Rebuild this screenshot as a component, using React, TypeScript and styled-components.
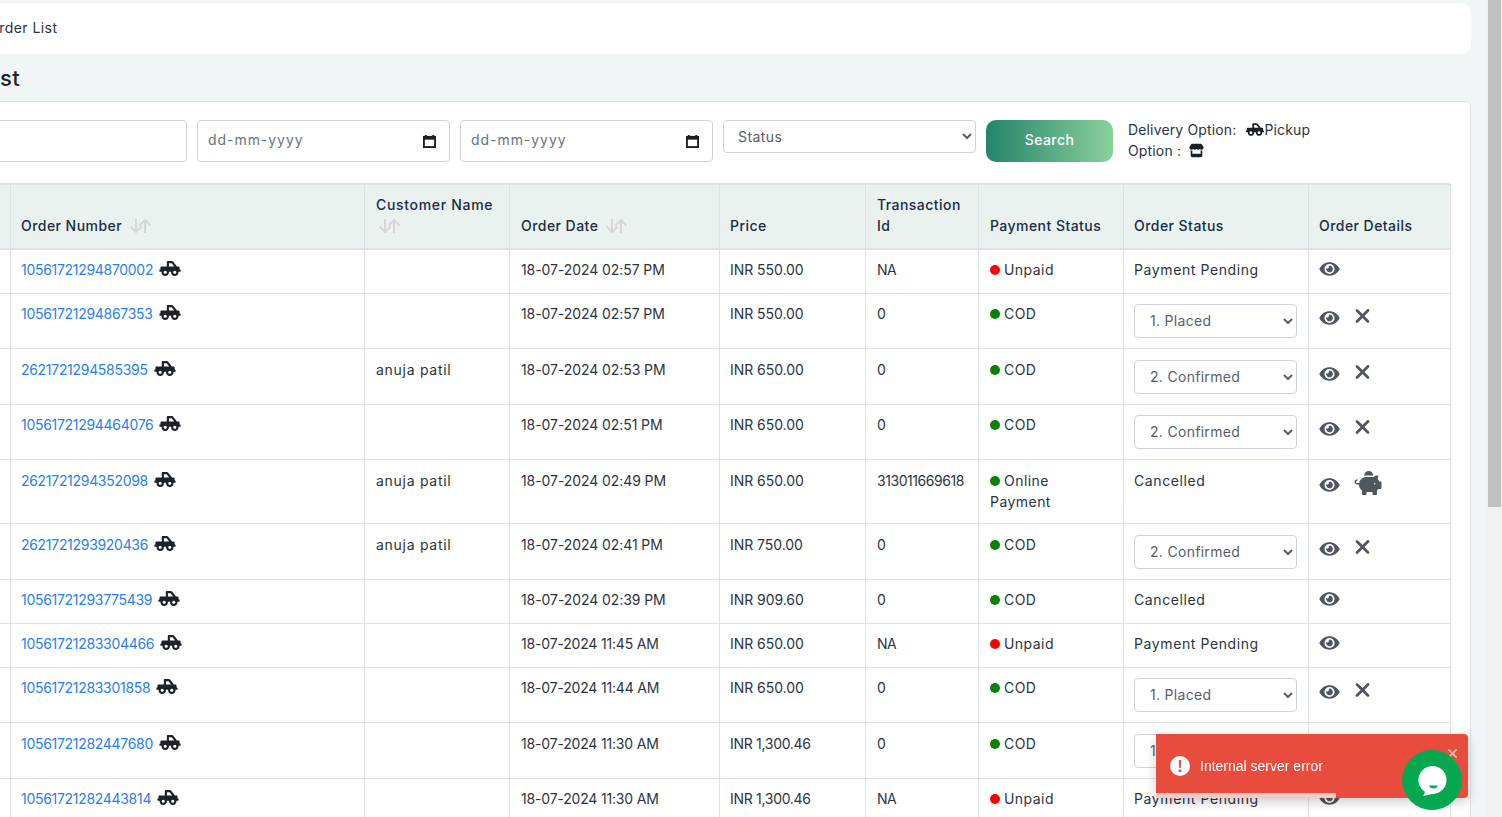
import React from "react";
import styled, { createGlobalStyle } from "styled-components";
import { FaEye, FaPiggyBank, FaTruckPickup } from "react-icons/fa";
import { FaStore, FaXmark } from "react-icons/fa6";

const Global = createGlobalStyle`
  * { box-sizing: border-box; }
  html, body { margin: 0; height: 100%; overflow: hidden; }
  body { font-family: Inter, "Open Sans", sans-serif; font-size: 14px; line-height: 21px; letter-spacing: .45px; color: #212b36; }
`;

const Shell = styled.div`display: flex; width: 1502px; height: 817px; overflow: hidden; background: #f1f5f5;`;
const Viewport = styled.div`flex: 1; min-width: 0; overflow: hidden;`;
const Page = styled.main`width: 1887px; margin-left: -400px; padding: 3px 16px 0 300px;`;
const Crumb = styled.div`height: 51px; background: #fff; border-radius: 10px; padding: 14px 0 0 88px; color: #2b3440;`;
const Title = styled.h1`margin: 11px 0 10px 13px; font-size: 22px; line-height: 26px; font-weight: 500; color: #1c2530; letter-spacing: .4px;`;
const Card = styled.section`background: #fff; border: 1px solid #dfe3e7; border-radius: 4px; padding: 18px 19px 20px 33px;`;
const Filters = styled.div`display: flex; align-items: flex-start; gap: 10px; height: 42px; margin-bottom: 21px;`;
const DateBox = styled.div`width: 253px; height: 42px; border: 1px solid #ced4da; border-radius: 4px; background: #fff; display: flex; align-items: center; justify-content: space-between; padding: 0 13px 3px 10px; color: #6a7480; letter-spacing: .95px;`;
const BlankBox = styled(DateBox)``;
const CalendarSvg = styled.svg`flex: none; margin-top: 3px;`;
const StatusSelect = styled.select`width: 253px; height: 33px; border: 1px solid #ced4da; border-radius: 4px; background: #fff; padding: 0 10px; font: inherit; letter-spacing: inherit; color: #56606c;`;
const SearchButton = styled.button`width: 127px; height: 42px; margin: 0; padding: 0 0 3px; border: 0; border-radius: 10px; background: linear-gradient(90deg, #23856a, #8ad09a); color: #fff; font: 500 14px/21px Inter, sans-serif; letter-spacing: .45px;`;
const Delivery = styled.div`margin-left: 5px; margin-top: -1px; color: #2b3440; white-space: nowrap; letter-spacing: .15px;`;
const DeliveryLine = styled.div`display: flex; align-items: center; height: 21px;`;
const DeliveryTruck = styled(FaTruckPickup)`width: 18px; height: 15px; margin-left: 10px; color: #1d2228;`;
const Store = styled(FaStore)`width: 15px; height: 15px; margin-left: 8px; color: #1d2228;`;
const Table = styled.table`width: 1516px; table-layout: fixed; border-collapse: collapse; border: 1px solid #dee2e6; border-top-width: 2px;`;
const Head = styled.th<{ $ls?: number }>`height: 63px; padding: 9px 10px 12px; vertical-align: bottom; text-align: left; font-weight: 500; background: #e9f2ef; border: 1px solid #dee2e6; border-bottom-width: 2px; color: #1b2b44; ${p => p.$ls !== undefined ? `letter-spacing: ${p.$ls}px;` : ""} &:nth-child(3), &:nth-child(4), &:nth-child(6), &:nth-child(7) { padding-left: 11px; }`;
const Row = styled.tr<{ $h: number; $low: boolean }>`height: ${p => p.$h}px; & > td { padding-top: ${p => (p.$low ? 10 : 9)}px; }`;
const Cell = styled.td<{ $ls?: number }>`padding: 9px 10px; vertical-align: top; border: 1px solid #dee2e6; color: #2b3440; ${p => p.$ls !== undefined ? `letter-spacing: ${p.$ls}px;` : ""} &:nth-child(3), &:nth-child(4), &:nth-child(6), &:nth-child(7) { padding-left: 11px; }`;
const OrderLink = styled.a`color: #2a7ff0; margin-right: 6px; letter-spacing: -.3px;`;
const Truck = styled(FaTruckPickup)`width: 22px; height: 17px; vertical-align: -2px; color: #1d2228;`;
const Dot = styled.span<{ $c: string }>`display: inline-block; width: 10px; height: 10px; margin-right: 4px; border-radius: 50%; background: ${p => p.$c};`;
const RowSelect = styled.select`display: block; width: 163px; height: 34px; margin-top: 1px; border: 1px solid #ced4da; border-radius: 4px; background: #fff; padding: 0 11px; font: inherit; letter-spacing: .3px; color: #56606c;`;
const Actions = styled.div<{ $top: number }>`display: flex; align-items: flex-start; gap: 14px; margin-top: ${p => p.$top}px; color: #50565d;`;
const Eye = styled(FaEye)`width: 21px; height: 18px; flex: none;`;
const Cross = styled(FaXmark)`width: 17px; height: 22px; margin-top: -4px; flex: none;`;
const Piggy = styled(FaPiggyBank)`width: 28px; height: 24px; margin-top: -5px; flex: none;`;
const SortSvg = styled.svg<{ $ml: number }>`vertical-align: -2px; margin-left: ${p => p.$ml}px;`;
const ScrollTrack = styled.div`width: 15px; flex: none; background: #f1f1f1; padding: 0 1px;`;
const ScrollThumb = styled.div`height: 507px; background: #c1c1c1;`;
const Toast = styled.div`position: fixed; left: 1156px; top: 734px; width: 312px; height: 64px; background: #e74c3c; border-radius: 0 4px 4px 0; box-shadow: 0 4px 12px rgba(0,0,0,.2); color: #fff; display: flex; align-items: center; padding: 0 14px; gap: 10px; font-family: "Liberation Sans", Arial, sans-serif; letter-spacing: 0;`;
const ToastBar = styled.div`position: absolute; left: 0; bottom: 0; width: 180px; height: 5px; background: rgba(255,255,255,.7);`;
const ToastClose = styled(FaXmark)`position: absolute; right: 10px; top: 12px; width: 11px; height: 15px; color: #f5b5ae;`;
const Chat = styled.div`position: fixed; left: 1402px; top: 750px; width: 60px; height: 60px; border-radius: 50%; background: #05a84f; display: flex; align-items: center; justify-content: center;`;

const Sort = ({ ml = 7 }: { ml?: number }) => (
  <SortSvg $ml={ml} width="22" height="14" viewBox="0 0 22 14" fill="none" stroke="#d6d6d6" strokeWidth="2">
    <path d="M7 0v13M1.500 7.500 7 13l5.500-5.500M16 14V1M10.500 6.500 16 1l5.500 5.500" />
  </SortSvg>
);
const Calendar = () => (
  <CalendarSvg width="13" height="13" viewBox="0 0 14 14" fill="none">
    <path d="M3 0v2M11 0v2" stroke="#1e1e1e" strokeWidth="2" />
    <rect x="1" y="2" width="12" height="11" stroke="#1e1e1e" strokeWidth="2" fill="none" />
    <rect x="1" y="2" width="12" height="3" fill="#1e1e1e" />
  </CalendarSvg>
);
const ChatIcon = () => (
  <svg width="34" height="34" viewBox="0 0 34 34">
    <path d="M17 3a14 14 0 0 1 1 28c-3 .3-7 1.500-10 2 1.300-1.500 2-2.800 1.800-4.200A14 14 0 0 1 17 3Z" fill="#fff" />
    <path d="M14 22.500h9c-.6 2-2.300 3-4.500 3s-3.900-1-4.500-3Z" fill="#05a84f" />
  </svg>
);

type R = { h: number; no: string; name?: string; date: string; price: string; tx: string; pay: string; status: string; select?: boolean; eye: number; extra?: "x" | "pig" };
const rows: R[] = [
  { h: 44, no: "10561721294870002", date: "18-07-2024 02:57 PM", price: "INR 550.00", tx: "NA", pay: "Unpaid", status: "Payment Pending", eye: 1 },
  { h: 55, no: "10561721294867353", date: "18-07-2024 02:57 PM", price: "INR 550.00", tx: "0", pay: "COD", status: "1. Placed", select: true, eye: 6, extra: "x" },
  { h: 56, no: "2621721294585395", name: "anuja patil", date: "18-07-2024 02:53 PM", price: "INR 650.00", tx: "0", pay: "COD", status: "2. Confirmed", select: true, eye: 6, extra: "x" },
  { h: 55, no: "10561721294464076", date: "18-07-2024 02:51 PM", price: "INR 650.00", tx: "0", pay: "COD", status: "2. Confirmed", select: true, eye: 6, extra: "x" },
  { h: 64, no: "2621721294352098", name: "anuja patil", date: "18-07-2024 02:49 PM", price: "INR 650.00", tx: "313011669618", pay: "Online", status: "Cancelled", eye: 6, extra: "pig" },
  { h: 56, no: "2621721293920436", name: "anuja patil", date: "18-07-2024 02:41 PM", price: "INR 750.00", tx: "0", pay: "COD", status: "2. Confirmed", select: true, eye: 6, extra: "x" },
  { h: 44, no: "10561721293775439", date: "18-07-2024 02:39 PM", price: "INR 909.60", tx: "0", pay: "COD", status: "Cancelled", eye: 1 },
  { h: 44, no: "10561721283304466", date: "18-07-2024 11:45 AM", price: "INR 650.00", tx: "NA", pay: "Unpaid", status: "Payment Pending", eye: 1 },
  { h: 55, no: "10561721283301858", date: "18-07-2024 11:44 AM", price: "INR 650.00", tx: "0", pay: "COD", status: "1. Placed", select: true, eye: 6, extra: "x" },
  { h: 56, no: "10561721282447680", date: "18-07-2024 11:30 AM", price: "INR 1,300.46", tx: "0", pay: "COD", status: "1. Placed", select: true, eye: 6, extra: "x" },
  { h: 44, no: "10561721282443814", date: "18-07-2024 11:30 AM", price: "INR 1,300.46", tx: "NA", pay: "Unpaid", status: "Payment Pending", eye: 1 },
];
const widths = [76, 354, 145, 210, 146, 113, 145, 185, 142];

export default function App() {
  return (
    <Shell>
      <Global />
      <Viewport>
        <Page>
          <Crumb>Order List</Crumb>
          <Title>Order List</Title>
          <Card>
            <Filters>
              <BlankBox />
              <DateBox>dd-mm-yyyy<Calendar /></DateBox>
              <DateBox>dd-mm-yyyy<Calendar /></DateBox>
              <StatusSelect defaultValue="Status"><option>Status</option></StatusSelect>
              <SearchButton>Search</SearchButton>
              <Delivery>
                <DeliveryLine>Delivery Option:<DeliveryTruck />Pickup</DeliveryLine>
                <DeliveryLine>Option :<Store /></DeliveryLine>
              </Delivery>
            </Filters>
            <Table>
              <colgroup>{widths.map((w, i) => <col key={i} width={w} />)}</colgroup>
              <thead>
                <tr>
                  <Head />
                  <Head>Order Number<Sort /></Head>
                  <Head $ls={.68}>Customer Name<Sort ml={2} /></Head>
                  <Head>Order Date<Sort /></Head>
                  <Head>Price</Head>
                  <Head>Transaction Id</Head>
                  <Head>Payment Status</Head>
                  <Head>Order Status</Head>
                  <Head>Order Details</Head>
                </tr>
              </thead>
              <tbody>
                {rows.map(r => (
                  <Row key={r.no} $h={r.h} $low={r.h >= 56}>
                    <Cell />
                    <Cell><OrderLink>{r.no}</OrderLink><Truck /></Cell>
                    <Cell $ls={.72}>{r.name}</Cell>
                    <Cell $ls={r.date.includes(" 11:") ? -.18 : -.08}>{r.date}</Cell>
                    <Cell $ls={r.price.includes(",") ? -.3 : -.05}>{r.price}</Cell>
                    <Cell $ls={-.45}>{r.tx}</Cell>
                    <Cell>
                      <Dot $c={r.pay === "Unpaid" ? "#f00" : "#078207"} />{r.pay}
                      {r.pay === "Online" && <><br />Payment</>}
                    </Cell>
                    <Cell $ls={.6}>
                      {r.select
                        ? <RowSelect defaultValue={r.status}><option>1. Placed</option><option>2. Confirmed</option></RowSelect>
                        : r.status}
                    </Cell>
                    <Cell>
                      <Actions $top={r.eye}>
                        <Eye />
                        {r.extra === "x" && <Cross />}
                        {r.extra === "pig" && <Piggy />}
                      </Actions>
                    </Cell>
                  </Row>
                ))}
              </tbody>
            </Table>
          </Card>
        </Page>
      </Viewport>
      <ScrollTrack><ScrollThumb /></ScrollTrack>
      <Toast>
        <svg width="20" height="20" viewBox="0 0 20 20"><circle cx="10" cy="10" r="10" fill="#fff" /><path d="M8.800 4h2.400l-.4 8H9.200ZM8.700 13.500h2.600V16H8.700Z" fill="#e74c3c" /></svg>
        Internal server error
        <ToastClose />
        <ToastBar />
      </Toast>
      <Chat><ChatIcon /></Chat>
    </Shell>
  );
}
